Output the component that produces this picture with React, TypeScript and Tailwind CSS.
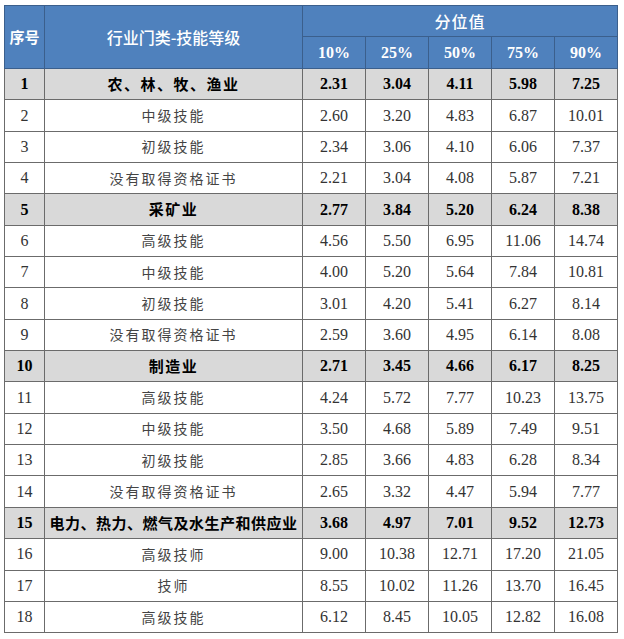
type Row = {
  no: string;
  name: string;
  vals: string[];
  major?: boolean;
};

const rows: Row[] = [
  { no: "1", name: "农、林、牧、渔业", vals: ["2.31", "3.04", "4.11", "5.98", "7.25"], major: true },
  { no: "2", name: "中级技能", vals: ["2.60", "3.20", "4.83", "6.87", "10.01"] },
  { no: "3", name: "初级技能", vals: ["2.34", "3.06", "4.10", "6.06", "7.37"] },
  { no: "4", name: "没有取得资格证书", vals: ["2.21", "3.04", "4.08", "5.87", "7.21"] },
  { no: "5", name: "采矿业", vals: ["2.77", "3.84", "5.20", "6.24", "8.38"], major: true },
  { no: "6", name: "高级技能", vals: ["4.56", "5.50", "6.95", "11.06", "14.74"] },
  { no: "7", name: "中级技能", vals: ["4.00", "5.20", "5.64", "7.84", "10.81"] },
  { no: "8", name: "初级技能", vals: ["3.01", "4.20", "5.41", "6.27", "8.14"] },
  { no: "9", name: "没有取得资格证书", vals: ["2.59", "3.60", "4.95", "6.14", "8.08"] },
  { no: "10", name: "制造业", vals: ["2.71", "3.45", "4.66", "6.17", "8.25"], major: true },
  { no: "11", name: "高级技能", vals: ["4.24", "5.72", "7.77", "10.23", "13.75"] },
  { no: "12", name: "中级技能", vals: ["3.50", "4.68", "5.89", "7.49", "9.51"] },
  { no: "13", name: "初级技能", vals: ["2.85", "3.66", "4.83", "6.28", "8.34"] },
  { no: "14", name: "没有取得资格证书", vals: ["2.65", "3.32", "4.47", "5.94", "7.77"] },
  { no: "15", name: "电力、热力、燃气及水生产和供应业", vals: ["3.68", "4.97", "7.01", "9.52", "12.73"], major: true },
  { no: "16", name: "高级技师", vals: ["9.00", "10.38", "12.71", "17.20", "21.05"] },
  { no: "17", name: "技师", vals: ["8.55", "10.02", "11.26", "13.70", "16.45"] },
  { no: "18", name: "高级技能", vals: ["6.12", "8.45", "10.05", "12.82", "16.08"] },
];

const serif = "font-['Liberation_Serif','Times_New_Roman',serif]";
const cjk = "font-['Noto_Sans_CJK_SC',sans-serif]";

export default function App() {
  return (
    <div className="w-[624px] h-[639px] bg-white pt-[5px] pl-[4px]">
      <table className="table-fixed border-collapse w-[613px] text-center">
        <colgroup>
          <col className="w-[40px]" />
          <col className="w-[258px]" />
          <col className="w-[63px]" />
          <col className="w-[63px]" />
          <col className="w-[63px]" />
          <col className="w-[63px]" />
          <col className="w-[63px]" />
        </colgroup>
        <thead>
          <tr className="h-[31px] bg-[#4f81bd] text-white">
            <th rowSpan={2} className={`border border-[#3b5f8c] ${cjk} text-[15px] font-bold`}>
              序号
            </th>
            <th rowSpan={2} className={`border border-[#3b5f8c] ${cjk} text-[16px] font-medium`}>
              行业门类-技能等级
            </th>
            <th colSpan={5} className={`border border-[#3b5f8c] ${cjk} text-[16px] font-medium tracking-[1px]`}>
              分位值
            </th>
          </tr>
          <tr className="h-[32px] bg-[#4f81bd] text-white">
            {["10%", "25%", "50%", "75%", "90%"].map((p) => (
              <th key={p} className={`border border-[#3b5f8c] ${serif} text-[16px] font-bold`}>
                {p}
              </th>
            ))}
          </tr>
        </thead>
        <tbody>
          {rows.map((r) => (
            <tr
              key={r.no}
              className={`h-[31.35px] ${r.major ? "bg-[#d9d9d9] text-black font-bold" : "bg-white text-[#333]"}`}
            >
              <td className={`border border-[#6b6b6b] ${serif} text-[16px]`}>{r.no}</td>
              <td
                className={`border border-[#6b6b6b] ${cjk} ${
                  r.major
                    ? r.name.length > 10
                      ? "text-[15px] tracking-[0.5px]"
                      : "text-[15px] tracking-[1.5px]"
                    : "text-[14px] tracking-[2px] text-[#444]"
                }`}
              >
                {r.name}
              </td>
              {r.vals.map((v, i) => (
                <td key={i} className={`border border-[#6b6b6b] ${serif} text-[16px]`}>
                  {v}
                </td>
              ))}
            </tr>
          ))}
        </tbody>
      </table>
    </div>
  );
}
